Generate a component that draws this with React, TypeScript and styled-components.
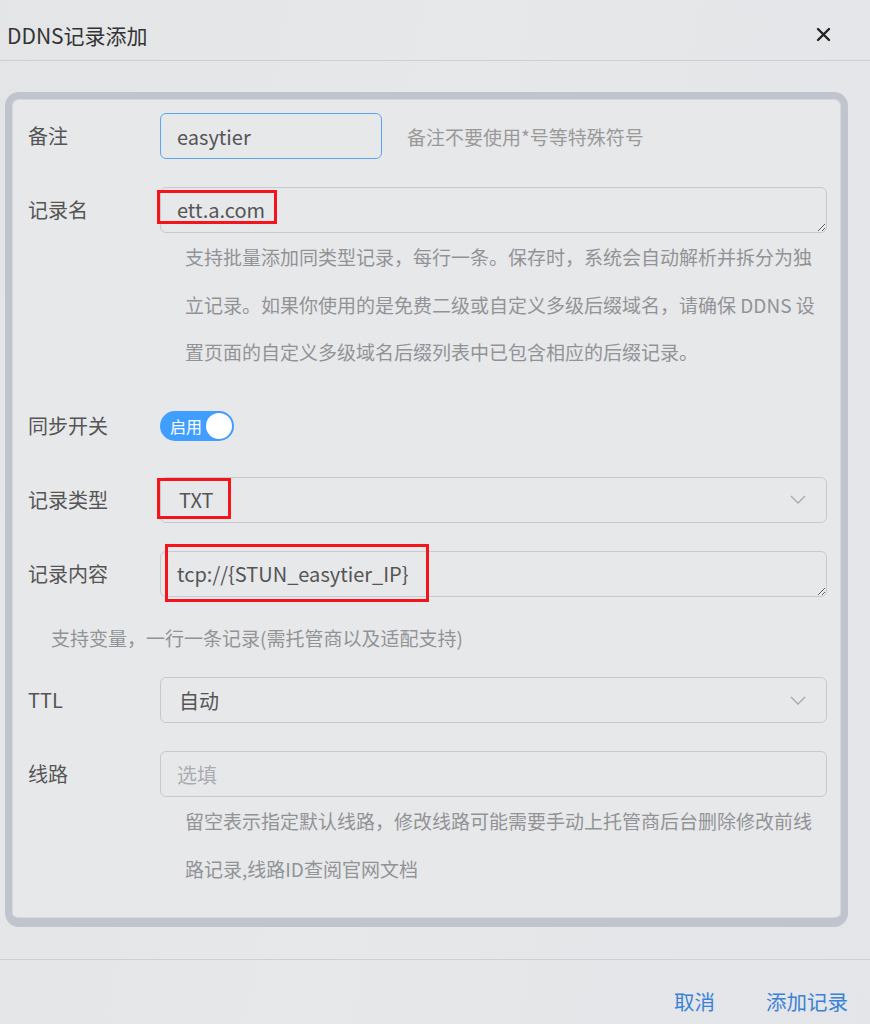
import React from 'react'
import styled, { createGlobalStyle } from 'styled-components'

const GlobalStyle = createGlobalStyle`
  html, body {
    margin: 0;
    padding: 0;
    background: #e5e6e8;
  }
  body {
    font-family: 'Noto Sans CJK SC', 'Noto Sans', sans-serif;
    color: #555;
  }
  * {
    box-sizing: border-box;
  }
`

const Dialog = styled.div`
  width: 870px;
  min-height: 1024px;
  background: linear-gradient(100deg, #e4e5e7 0%, #e7e8ea 45%, #e3e5e8 100%);
  display: flex;
  flex-direction: column;
`

const Header = styled.div`
  height: 61px;
  padding: 10px 39px 0 7px;
  display: flex;
  align-items: center;
  justify-content: space-between;
  border-bottom: 1px solid #cfd0d3;
`

const Title = styled.div`
  font-size: 21px;
  color: #333;
`

const CloseButton = styled.div`
  width: 16px;
  height: 16px;
  display: flex;
  align-items: center;
  justify-content: center;
  margin-top: -2px;
`

const Body = styled.div`
  padding: 31px 22px 32px 5px;
`

const Panel = styled.div`
  border: 7px solid #c0c4cc;
  border-bottom-width: 9px;
  border-radius: 14px;
  box-shadow: inset 0 0 0 1px #d6d8dc;
  background: #e7e8ea;
  padding: 14px 14px 26px 16px;
`

const FormItem = styled.div<{ $gap?: number }>`
  display: grid;
  grid-template-columns: 132px 1fr;
  margin-bottom: ${(p) => (p.$gap ?? 28)}px;
  &:last-child {
    margin-bottom: 0;
  }
`

const Label = styled.div`
  font-size: 20px;
  line-height: 46px;
  height: 46px;
  color: #555;
`

const Field = styled.div`
  position: relative;
  min-width: 0;
`

const Inline = styled.div`
  display: flex;
  align-items: center;
  gap: 25px;
`

const TextInput = styled.input<{ $width?: number; $focused?: boolean }>`
  display: block;
  width: ${(p) => (p.$width ? `${p.$width}px` : '100%')};
  height: 46px;
  padding: 0 16px;
  border: 1px solid ${(p) => (p.$focused ? '#5aa6f6' : '#c6c9ce')};
  border-radius: 6px;
  background: transparent;
  font: inherit;
  font-size: 20px;
  color: #555;
  outline: none;
  &::placeholder {
    color: #a9acb1;
  }
`

const TextArea = styled.textarea`
  display: block;
  width: 100%;
  height: 46px;
  padding: 9px 16px;
  border: 1px solid #c6c9ce;
  border-radius: 6px;
  background: transparent;
  font: inherit;
  font-size: 20px;
  line-height: 26px;
  color: #555;
  outline: none;
  overflow: hidden;
`

const Select = styled.div`
  height: 46px;
  padding: 0 20px 0 18px;
  border: 1px solid #c6c9ce;
  border-radius: 6px;
  display: flex;
  align-items: center;
  justify-content: space-between;
  font-size: 20px;
  color: #555;
`

const Hint = styled.div`
  font-size: 19px;
  color: #999;
  white-space: nowrap;
`

const Help = styled.div<{ $indent: number; $top?: number }>`
  padding-left: ${(p) => p.$indent}px;
  padding-top: ${(p) => p.$top ?? 0}px;
  font-size: 19px;
  line-height: 47.5px;
  color: #929396;
`

const FullHelp = styled(Help)`
  grid-column: 1 / -1;
`

const Switch = styled.div`
  width: 74px;
  height: 30px;
  margin-top: 8px;
  border-radius: 15px;
  background: #409eff;
  display: flex;
  align-items: center;
  justify-content: space-between;
  padding: 0 2px 0 10px;
`

const SwitchText = styled.span`
  font-size: 16px;
  color: #fff;
`

const SwitchKnob = styled.span`
  width: 26px;
  height: 26px;
  border-radius: 50%;
  background: #fff;
`

const Highlight = styled.div<{ $l: number; $t: number; $w: number; $h: number }>`
  position: absolute;
  left: ${(p) => p.$l}px;
  top: ${(p) => p.$t}px;
  width: ${(p) => p.$w}px;
  height: ${(p) => p.$h}px;
  border: 3px solid #f5141c;
  pointer-events: none;
`

const Footer = styled.div`
  border-top: 1px solid #cfd0d3;
  padding: 26px 22px 0 0;
  display: flex;
  justify-content: flex-end;
  gap: 51px;
`

const TextButton = styled.div`
  font-size: 20.5px;
  color: #3a82d6;
`

const Chevron = () => (
  <svg width="16" height="9" viewBox="0 0 16 9" fill="none">
    <polyline points="1,1 8,8 15,1" stroke="#a6a9ae" strokeWidth="1.3" />
  </svg>
)

export default function App() {
  return (
    <>
      <GlobalStyle />
      <Dialog>
        <Header>
          <Title>DDNS记录添加</Title>
          <CloseButton>
            <svg width="15" height="15" viewBox="0 0 15 15">
              <path d="M2 2 L13 13 M13 2 L2 13" stroke="#222" strokeWidth="2.4" strokeLinecap="round" />
            </svg>
          </CloseButton>
        </Header>

        <Body>
          <Panel>
            <FormItem>
              <Label>备注</Label>
              <Field>
                <Inline>
                  <TextInput $width={222} $focused readOnly value="easytier" />
                  <Hint>备注不要使用*号等特殊符号</Hint>
                </Inline>
              </Field>
            </FormItem>

            <FormItem $gap={27}>
              <Label>记录名</Label>
              <Field>
                <TextArea readOnly rows={1} value="ett.a.com" />
                <Highlight $l={-3} $t={3} $w={120} $h={34} />
                <Help $indent={25}>
                  支持批量添加同类型记录，每行一条。保存时，系统会自动解析并拆分为独
                  <br />
                  立记录。如果你使用的是免费二级或自定义多级后缀域名，请确保 DDNS 设
                  <br />
                  置页面的自定义多级域名后缀列表中已包含相应的后缀记录。
                </Help>
              </Field>
            </FormItem>

            <FormItem>
              <Label>同步开关</Label>
              <Field>
                <Switch>
                  <SwitchText>启用</SwitchText>
                  <SwitchKnob />
                </Switch>
              </Field>
            </FormItem>

            <FormItem>
              <Label>记录类型</Label>
              <Field>
                <Select>
                  <span>TXT</span>
                  <Chevron />
                </Select>
                <Highlight $l={-3} $t={1} $w={74} $h={41} />
              </Field>
            </FormItem>

            <FormItem $gap={16}>
              <Label>记录内容</Label>
              <Field>
                <TextArea readOnly rows={1} value="tcp://{STUN_easytier_IP}" />
                <Highlight $l={5} $t={-7} $w={264} $h={58} />
              </Field>
              <FullHelp $indent={23} $top={17}>
                支持变量，一行一条记录(需托管商以及适配支持)
              </FullHelp>
            </FormItem>

            <FormItem>
              <Label>TTL</Label>
              <Field>
                <Select>
                  <span>自动</span>
                  <Chevron />
                </Select>
              </Field>
            </FormItem>

            <FormItem>
              <Label>线路</Label>
              <Field>
                <TextInput readOnly placeholder="选填" />
                <Help $indent={25}>
                  留空表示指定默认线路，修改线路可能需要手动上托管商后台删除修改前线
                  <br />
                  路记录,线路ID查阅官网文档
                </Help>
              </Field>
            </FormItem>
          </Panel>
        </Body>

        <Footer>
          <TextButton>取消</TextButton>
          <TextButton>添加记录</TextButton>
        </Footer>
      </Dialog>
    </>
  )
}
